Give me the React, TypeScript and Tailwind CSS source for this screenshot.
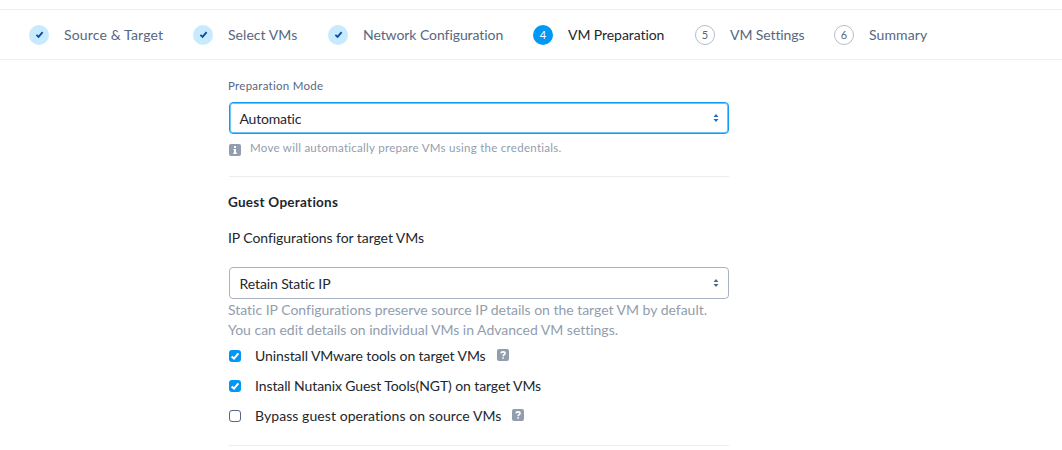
import type { ReactNode } from 'react';

function CheckMark({ className }: { className: string }) {
  return (
    <svg viewBox="0 0 12 12" className={className} fill="none" stroke="currentColor" strokeWidth="2">
      <path d="M2.6 6.4 5 8.6 9.4 3.4" />
    </svg>
  );
}

function Step({ n, label, state, className }: { n: number; label: string; state: 'done' | 'current' | 'todo'; className: string }) {
  const circle =
    state === 'done' ? 'bg-[#c8eafd] text-[#0a4ca5]' : state === 'current' ? 'bg-[#0098f3] text-white' : 'border border-[#b3bdca] text-[#56677f]';
  return (
    <li className={`flex shrink-0 items-center ${className}`}>
      <span className={`mr-[15px] flex size-5 shrink-0 items-center justify-center rounded-full text-[11px] leading-none ${circle}`}>
        {state === 'done' ? <CheckMark className="size-[11px]" /> : n}
      </span>
      <span className={`whitespace-nowrap ${state === 'current' ? 'text-[#22272e]' : 'text-[#56677f]'}`}>{label}</span>
    </li>
  );
}

function Select({ value, focused }: { value: string; focused?: boolean }) {
  return (
    <button
      className={`flex h-8 w-[500px] items-center justify-between rounded-[4px] border bg-white pr-[9px] pl-[9.5px] text-left ${
        focused
          ? 'border-[#0d9df4] tracking-[-0.2px] text-[#1b6dc6] shadow-[inset_0_0_0_1px_#6cc4f8]'
          : 'border-[#a9b3c4] tracking-[-0.1px] text-[#56677f]'
      }`}
    >
      <span className="pt-[2px] text-[#22272e]">{value}</span>
      <svg viewBox="0 0 6 8" className="h-2 w-1.5" fill="currentColor">
        <path d="M3 0 5.5 3H.5zM3 8 .5 5h5z" />
      </svg>
    </button>
  );
}

function Badge({ children }: { children: ReactNode }) {
  return (
    <span className="flex size-3 shrink-0 items-center justify-center rounded-[2px] bg-[#929dae] text-white">{children}</span>
  );
}

function Option({ label, checked, help, className }: { label: string; checked?: boolean; help?: boolean; className: string }) {
  return (
    <label className="flex h-[30px] items-center">
      <span className={`mr-[14px] flex size-3 items-center justify-center rounded-[3px] ${checked ? 'bg-[#0098f3] text-white' : 'border border-[#56677f] bg-white'}`}>
        {checked && <CheckMark className="size-3" />}
      </span>
      <span className={className}>{label}</span>
      {help && (
        <span className="mb-[2px] ml-[11px]">
          <Badge>
            <svg viewBox="0 0 12 12" className="size-3" fill="none" stroke="currentColor" strokeWidth="1.6">
              <path d="M4 4.3C4.2 2.4 8 2.4 8 4.4 8 5.7 6.1 5.6 6.1 7.2M6.1 8.200v1.500" />
            </svg>
          </Badge>
        </span>
      )}
    </label>
  );
}

export default function App() {
  return (
    <div className="h-[450px] w-[1062px] overflow-hidden bg-white font-[Lato,sans-serif] text-sm text-[#22272e] [font-variant-ligatures:none]">
      <ol className="mt-[9px] flex h-[51px] border-y border-[#ededee] pl-[29px]">
        <Step n={1} label="Source & Target" state="done" className="w-[164px] tracking-[0.15px]" />
        <Step n={2} label="Select VMs" state="done" className="w-[135px] tracking-[0.05px]" />
        <Step n={3} label="Network Configuration" state="done" className="w-[205px] tracking-[-0.07px]" />
        <Step n={4} label="VM Preparation" state="current" className="w-[162px] tracking-[-0.07px]" />
        <Step n={5} label="VM Settings" state="todo" className="w-[139px] tracking-[-0.1px]" />
        <Step n={6} label="Summary" state="todo" className="tracking-[0.1px]" />
      </ol>
      <main className="ml-[229px] w-[500px] pt-[18px]">
        <div className="-ml-px h-6 text-[11.5px] leading-4 tracking-[0.27px] text-[#56677f]">Preparation Mode</div>
        <Select value="Automatic" focused />
        <div className="flex h-[43px] border-b border-[#ededee] pt-[6px] text-[11.5px] leading-4 tracking-[0.28px] text-[#929dae]">
          <span className="mt-[4px] mr-[9px]">
            <Badge>
              <svg viewBox="0 0 12 12" className="size-3" fill="currentColor">
                <path d="M5 2h2v2H5zM4.500 5H7v3.500h.8V10H4.300V8.500h.7V6.300h-.5z" />
              </svg>
            </Badge>
          </span>
          <span>Move will automatically prepare VMs using the credentials.</span>
        </div>
        <h2 className="mt-[15px] -ml-px text-[13.5px] leading-5 font-bold tracking-[0.27px]">Guest Operations</h2>
        <p className="mt-[16px] mb-[19px] -ml-px leading-5 tracking-[-0.07px]">IP Configurations for target VMs</p>
        <Select value="Retain Static IP" />
        <p className="mt-px -ml-px leading-5 tracking-[-0.015px] text-[#929dae]">
          Static IP Configurations preserve source IP details on the target VM by default.
          <br />
          You can edit details on individual VMs in Advanced VM settings.
        </p>
        <div className="h-[106px] border-b border-[#ededee] pt-px">
          <Option label="Uninstall VMware tools on target VMs" checked help className="tracking-[-0.09px]" />
          <Option label="Install Nutanix Guest Tools(NGT) on target VMs" checked className="tracking-[-0.1px]" />
          <Option label="Bypass guest operations on source VMs" help className="tracking-[0.07px]" />
        </div>
      </main>
    </div>
  );
}
